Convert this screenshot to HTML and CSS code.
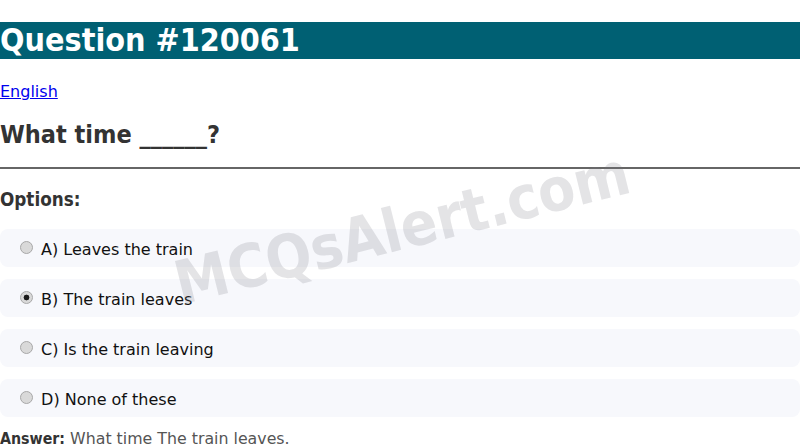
FILE: index.html
```html
<!DOCTYPE html>
<html>
<head>
<meta charset="utf-8">
<link rel="stylesheet" href="styles.css">
</head>
<body>
<h1 class="title">Question #120061</h1>
<div class="lang"><a href="#">English</a></div>
<h2 class="question">What time ______?</h2>
<hr class="rule">
<div class="opts-label">Options:</div>
<div class="options">
  <label class="option"><input type="radio" name="q"> A) Leaves the train</label>
  <label class="option"><input type="radio" name="q" checked> B) The train leaves</label>
  <label class="option"><input type="radio" name="q"> C) Is the train leaving</label>
  <label class="option"><input type="radio" name="q"> D) None of these</label>
</div>
<div class="answer"><b>Answer:</b> What time The train leaves.</div>
<div class="watermark">MCQsAlert.com</div>
</body>
</html>
```
FILE: styles.css
```css
body {
  margin: 0;
  font-family: "DejaVu Sans", sans-serif;
  font-size: 16px;
  color: #333;
  position: relative;
  overflow: hidden;
  height: 448px;
}
.title {
  margin: 22px 0 0;
  background: #006073;
  color: #fff;
  font-family: "DejaVu Sans Condensed", "DejaVu Sans", sans-serif;
  font-size: 32px;
  line-height: 37px;
  font-weight: bold;
}
.lang {
  margin-top: 23px;
  line-height: 19px;
}
.lang a {
  color: #0000ee;
}
.question {
  margin: 20px 0 0;
  font-family: "DejaVu Sans Condensed", "DejaVu Sans", sans-serif;
  font-size: 25px;
  line-height: 28px;
  font-weight: bold;
  color: #333;
}
.rule {
  margin: 18px 0 0;
  border: 0;
  border-top: 2px solid #666;
  height: 0;
}
.opts-label {
  margin-top: 21px;
  font-family: "DejaVu Sans Condensed", "DejaVu Sans", sans-serif;
  font-weight: bold;
  font-size: 18.72px;
  line-height: 20px;
  color: #333;
}
.options {
  margin-top: 19px;
  display: flex;
  flex-direction: column;
  gap: 12px;
}
.option {
  display: flex;
  align-items: center;
  background: #f7f8fc;
  border-radius: 8px;
  padding: 11px 15px 8px 20px;
  line-height: 19px;
  color: #111;
  white-space: pre;
}
.option input {
  appearance: none;
  -webkit-appearance: none;
  margin: 0 3px 0 0;
  width: 13px;
  height: 13px;
  border-radius: 50%;
  border: 1px solid #a8a8a8;
  background: #d9d9d9;
  box-sizing: border-box;
  position: relative;
  top: -2px;
}
.option input:checked {
  background: radial-gradient(circle, #1a1a1a 0 2.6px, #d9d9d9 3.2px);
}
.answer {
  margin-top: 12px;
  line-height: 19px;
  font-size: 15.8px;
  color: #555;
}
.answer b {
  font-family: "DejaVu Sans Condensed", "DejaVu Sans", sans-serif;
  color: #333;
}
.watermark {
  position: absolute;
  left: 402px;
  top: 228px;
  transform: translate(-50%, -50%) rotate(-14deg);
  font-family: "DejaVu Sans Condensed", "DejaVu Sans", sans-serif;
  font-size: 60px;
  font-weight: bold;
  color: rgba(120, 120, 130, 0.2);
  white-space: nowrap;
  pointer-events: none;
}
```
